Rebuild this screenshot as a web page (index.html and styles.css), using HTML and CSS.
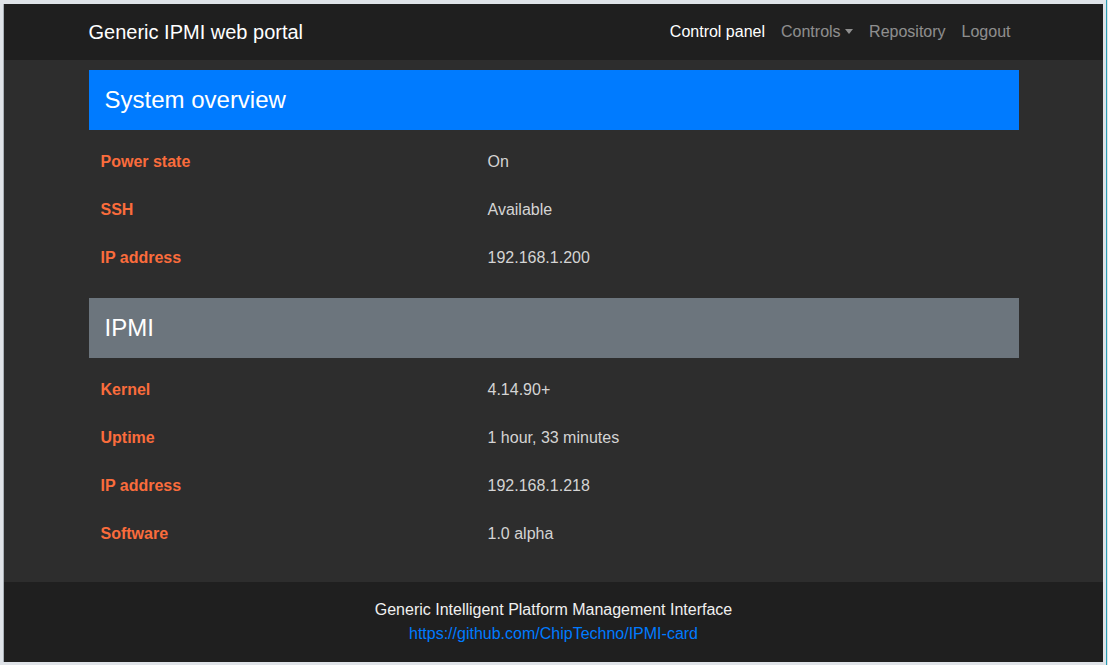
FILE: index.html
```html
<!DOCTYPE html>
<html lang="en">
<head>
<meta charset="utf-8">
<title>Generic IPMI web portal</title>
<link rel="stylesheet" href="styles.css">
</head>
<body>
<div class="page">
  <nav class="navbar">
    <div class="container nav-inner">
      <a class="brand" href="#">Generic IPMI web portal</a>
      <ul class="nav-links">
        <li><a class="nav-link active" href="#">Control panel</a></li>
        <li><a class="nav-link dropdown" href="#">Controls<span class="caret"></span></a></li>
        <li><a class="nav-link" href="#">Repository</a></li>
        <li><a class="nav-link" href="#">Logout</a></li>
      </ul>
    </div>
  </nav>
  <main class="main">
    <div class="container">
      <h2 class="section-title primary">System overview</h2>
      <div class="info-table">
        <div class="label">Power state</div><div class="value">On</div>
        <div class="label">SSH</div><div class="value">Available</div>
        <div class="label">IP address</div><div class="value">192.168.1.200</div>
      </div>
      <h2 class="section-title secondary">IPMI</h2>
      <div class="info-table">
        <div class="label">Kernel</div><div class="value">4.14.90+</div>
        <div class="label">Uptime</div><div class="value">1 hour, 33 minutes</div>
        <div class="label">IP address</div><div class="value">192.168.1.218</div>
        <div class="label">Software</div><div class="value">1.0 alpha</div>
      </div>
    </div>
  </main>
  <footer class="footer">
    <div class="footer-text">Generic Intelligent Platform Management Interface</div>
    <a class="footer-link" href="#">https://github.com/ChipTechno/IPMI-card</a>
  </footer>
</div>
</body>
</html>
```

FILE: styles.css
```css
* { box-sizing: border-box; }

html {
  margin: 0;
  height: 100%;
  background: linear-gradient(to left, #dfe3e8 1px, #2a9fb5 1px, #2a9fb5 2px, #dfe3e8 2px);
}

body {
  margin: 4px 5px 3px 4px;
  font-family: "Liberation Sans", Arial, sans-serif;
  font-size: 16px;
  line-height: 1.5;
  color: #d4d4d4;
  box-shadow: -1px 0 0 #a9b0b7;
}

.page {
  display: flex;
  flex-direction: column;
  height: 658px;
  background: #2d2d2d;
}

.container {
  width: 930px;
  margin: 0 auto;
}

.navbar {
  background: #1f1f1f;
  height: 56px;
  flex: 0 0 auto;
}

.nav-inner {
  height: 100%;
  display: flex;
  align-items: center;
  justify-content: space-between;
}

.brand {
  color: #ffffff;
  font-size: 20px;
  text-decoration: none;
  line-height: 30px;
}

.nav-links {
  list-style: none;
  margin: 0;
  padding: 0;
  display: flex;
}

.nav-link {
  display: flex;
  align-items: center;
  padding: 8px;
  color: rgba(255, 255, 255, 0.5);
  text-decoration: none;
}

.nav-link.active {
  color: #ffffff;
}

.caret {
  display: inline-block;
  margin-left: 4.5px;
  width: 0;
  height: 0;
  border-left: 4.8px solid transparent;
  border-right: 4.8px solid transparent;
  border-top: 5px solid rgba(255, 255, 255, 0.5);
  transform: translateY(-1px);
}

.main {
  flex: 1 1 auto;
  padding-top: 10px;
}

.section-title {
  margin: 0 0 8px;
  height: 60px;
  padding: 0 16px;
  display: flex;
  align-items: center;
  font-size: 24px;
  font-weight: 400;
  color: #ffffff;
}

.section-title.primary { background: #007bff; }
.section-title.secondary { background: #6c757d; }

.info-table {
  display: grid;
  grid-template-columns: 387px 1fr;
  margin-bottom: 16px;
}

.label,
.value {
  padding: 12px;
  line-height: 24px;
}

.label {
  color: #fa6c3c;
  font-weight: 700;
}

.value {
  color: #d4d4d4;
}

.footer {
  flex: 0 0 80px;
  background: #1f1f1f;
  padding-top: 16px;
  text-align: center;
  display: flex;
  flex-direction: column;
  align-items: center;
}

.footer-text {
  color: #f0f0f0;
  line-height: 24px;
}

.footer-link {
  color: #007bff;
  text-decoration: none;
  line-height: 24px;
}
```
